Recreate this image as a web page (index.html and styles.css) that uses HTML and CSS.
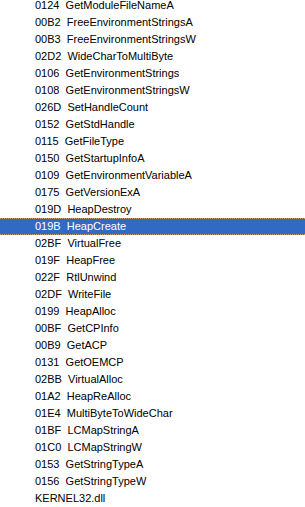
FILE: index.html
```html
<!DOCTYPE html>
<html lang="en">
<head>
    <meta charset="UTF-8">
    <meta name="viewport" content="width=device-width, initial-scale=1.0">
    <title>KERNEL32.dll</title>
    <link rel="stylesheet" href="styles.css">
</head>
<body>
    <ul class="import-list">
        <li class="import-item">0124&nbsp; GetModuleFileNameA</li>
        <li class="import-item">00B2&nbsp; FreeEnvironmentStringsA</li>
        <li class="import-item">00B3&nbsp; FreeEnvironmentStringsW</li>
        <li class="import-item">02D2&nbsp; WideCharToMultiByte</li>
        <li class="import-item">0106&nbsp; GetEnvironmentStrings</li>
        <li class="import-item">0108&nbsp; GetEnvironmentStringsW</li>
        <li class="import-item">026D&nbsp; SetHandleCount</li>
        <li class="import-item">0152&nbsp; GetStdHandle</li>
        <li class="import-item">0115&nbsp; GetFileType</li>
        <li class="import-item">0150&nbsp; GetStartupInfoA</li>
        <li class="import-item">0109&nbsp; GetEnvironmentVariableA</li>
        <li class="import-item">0175&nbsp; GetVersionExA</li>
        <li class="import-item">019D&nbsp; HeapDestroy</li>
        <li class="import-item selected">019B&nbsp; HeapCreate</li>
        <li class="import-item">02BF&nbsp; VirtualFree</li>
        <li class="import-item">019F&nbsp; HeapFree</li>
        <li class="import-item">022F&nbsp; RtlUnwind</li>
        <li class="import-item">02DF&nbsp; WriteFile</li>
        <li class="import-item">0199&nbsp; HeapAlloc</li>
        <li class="import-item">00BF&nbsp; GetCPInfo</li>
        <li class="import-item">00B9&nbsp; GetACP</li>
        <li class="import-item">0131&nbsp; GetOEMCP</li>
        <li class="import-item">02BB&nbsp; VirtualAlloc</li>
        <li class="import-item">01A2&nbsp; HeapReAlloc</li>
        <li class="import-item">01E4&nbsp; MultiByteToWideChar</li>
        <li class="import-item">01BF&nbsp; LCMapStringA</li>
        <li class="import-item">01C0&nbsp; LCMapStringW</li>
        <li class="import-item">0153&nbsp; GetStringTypeA</li>
        <li class="import-item">0156&nbsp; GetStringTypeW</li>
        <li class="import-item">KERNEL32.dll</li>
    </ul>
</body>
</html>
```

FILE: styles.css
```css
body {
    margin: 0;
    background-color: #fff;
    font-family: "Liberation Sans", Arial, sans-serif;
    font-size: 11px;
    color: #000;
    overflow: hidden;
}

.import-list {
    list-style: none;
    margin: -3px 0 0 0;
    padding: 0;
}

.import-item {
    height: 17px;
    line-height: 17px;
    padding-left: 35px;
    white-space: nowrap;
    box-sizing: border-box;
}

/* selected row with focus dots */
.import-item.selected {
    background-color: #316ac5;
    color: #fff;
    line-height: 15px;
    border-top: 1px dotted #c9a46a;
    border-bottom: 1px dotted #c9a46a;
}
```
